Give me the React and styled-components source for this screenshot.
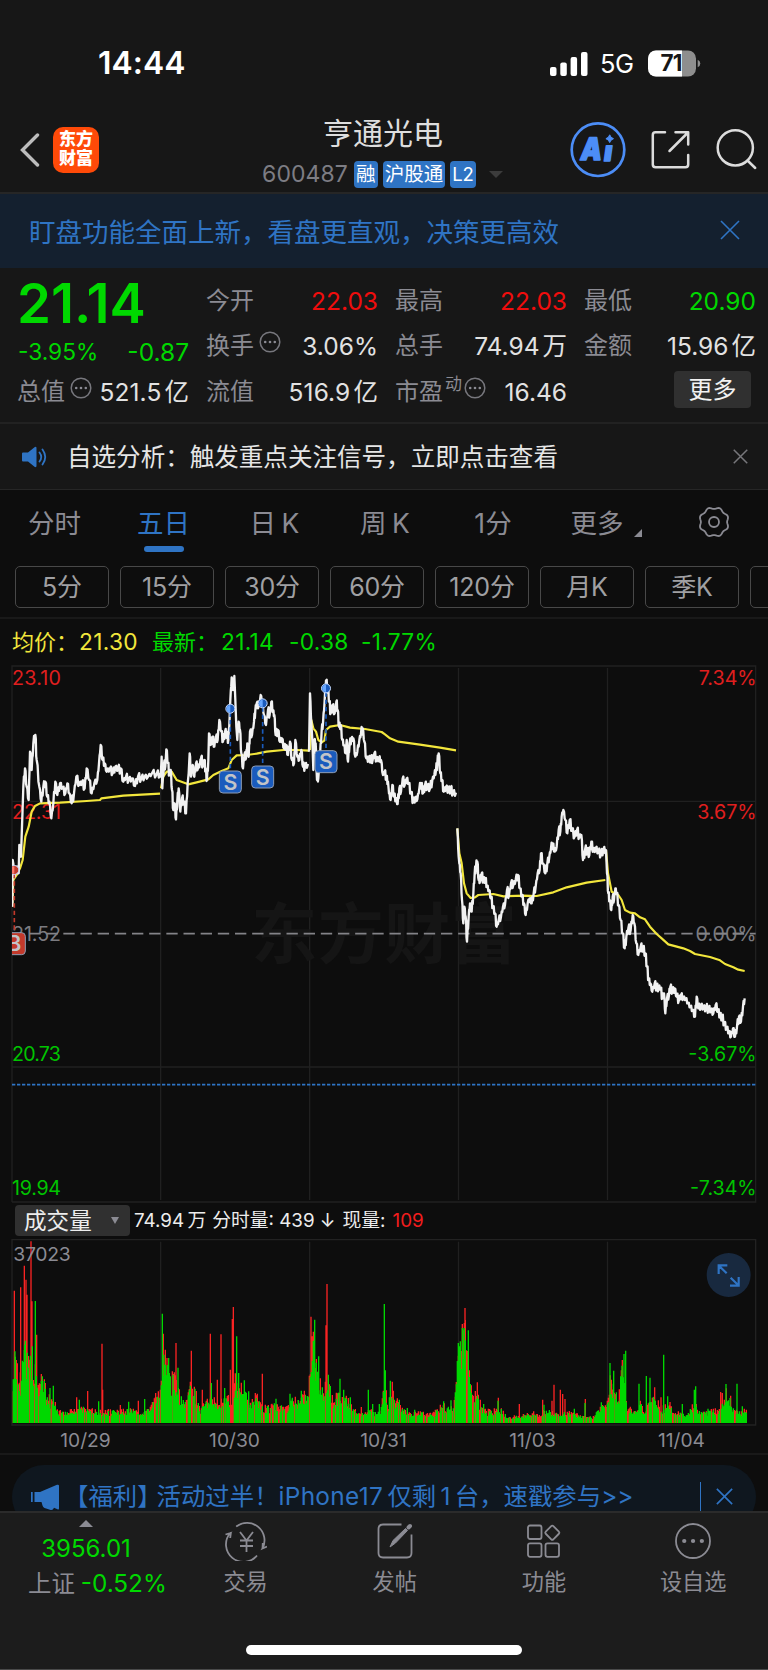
import React from "react";
import styled, { createGlobalStyle } from "styled-components";

const GREEN = "#00d800";
const RED = "#f00d0d";
const BLUE = "#2f74c4";
const GREY = "#8b8b93";

const GlobalStyle = createGlobalStyle`
    * {
        box-sizing: border-box;
    }
    body {
        margin: 0;
        background: #0d0d0d;
        color: #e6e6e6;
        font-family: Inter, "Noto Sans CJK SC", sans-serif;
    }
`;

const Screen = styled.div`
    width: 768px;
    height: 1670px;
    display: flex;
    flex-direction: column;
    overflow: hidden;
    white-space: nowrap;
`;

/* ---------- status bar ---------- */

const StatusBar = styled.div`
    height: 100px;
    flex: none;
    padding: 26px 67px 0 98px;
    display: flex;
    align-items: center;
    justify-content: space-between;
    background: #171717;
    color: #fff;
`;

const Clock = styled.span`
    font-size: 31.8px;
    font-weight: 600;
    line-height: 40px;
    letter-spacing: 0.1px;
`;

const StatusRight = styled.div`
    display: flex;
    align-items: center;
`;

const Network = styled.span`
    font-size: 25.5px;
    line-height: 30px;
    margin: 2px 12px 0 12px;
    width: 36px;
    letter-spacing: -0.4px;
`;

/* ---------- header ---------- */

const Header = styled.header`
    height: 94px;
    flex: none;
    display: grid;
    grid-template-columns: 200px 1fr 200px;
    background: #171717;
    border-bottom: 2px solid #262626;
`;

const HeaderLeft = styled.div`
    display: flex;
    align-items: center;
    padding: 5px 0 0 19px;
    gap: 12px;
    height: 94px;
`;

const Brand = styled.div`
    width: 46px;
    height: 46px;
    border-radius: 10px;
    background: #ff4a08;
    color: #fff;
    font-size: 17px;
    font-weight: 900;
    line-height: 19px;
    padding-top: 3px;
    text-align: center;
    white-space: normal;
`;

const HeaderTitle = styled.div`
    display: flex;
    flex-direction: column;
    align-items: center;
`;

const StockName = styled.div`
    font-size: 30px;
    line-height: 36px;
    margin-top: 15px;
    padding-right: 2px;
    color: #dedede;
`;

const StockMeta = styled.div`
    display: flex;
    align-items: center;
    gap: 5px;
    margin-top: 10px;
    padding-right: 3px;
`;

const Code = styled.span`
    font-size: 23px;
    line-height: 27px;
    letter-spacing: 0.05px;
    color: #7d7d84;
    width: 85px;
    margin-right: 2px;
`;

const Tag = styled.span`
    height: 27px;
    padding: 0 2px;
    border-radius: 4px;
    background: ${BLUE};
    color: #fff;
    font-size: ${(p) => p.$size || 19.5}px;
    line-height: 27px;
`;

const Caret = styled.span`
    border: 7px solid transparent;
    border-top-color: #3c3c3c;
    border-bottom: 0;
    margin-left: 8px;
`;

const HeaderRight = styled.div`
    display: flex;
    align-items: center;
    padding: 3px 0 0 1px;
    height: 94px;
`;

/* ---------- banner ---------- */

const Banner = styled.div`
    height: 74px;
    flex: none;
    padding: 2px 28px 0 29px;
    display: flex;
    align-items: center;
    justify-content: space-between;
    background: #14202f;
    color: ${BLUE};
    font-size: 26.5px;
    line-height: 40px;

    svg {
        margin-bottom: 4px;
    }
`;

/* ---------- quote ---------- */

const Quote = styled.section`
    height: 156px;
    flex: none;
    padding: 10px 0 0 18px;
    display: grid;
    grid-template-columns: repeat(4, 170px);
    grid-template-rows: 45.5px 45.5px 45.5px;
    column-gap: 19px;
    background: #171717;
    border-bottom: 2px solid #222;
`;

const Cell = styled.div`
    display: flex;
    align-items: center;
    justify-content: space-between;
    font-size: 24px;
    line-height: 30px;
    color: ${(p) => p.$color || "#e2e2e2"};
`;

const Label = styled.span`
    display: flex;
    align-items: center;
    color: ${GREY};
    gap: ${(p) => p.$gap || 0}px;
    margin-left: -1px;

    svg {
        margin-top: -8px;
    }
    sup {
        font-size: 17px;
        line-height: 17px;
        margin-top: -14px;
        vertical-align: baseline;
    }
`;

const Value = styled.span`
    font-size: ${(p) => p.$size || 24.5}px;
    letter-spacing: ${(p) => p.$track || 0}px;
    margin-right: -1px;

    i {
        font-style: normal;
        margin-left: 3px;
    }
`;

const Price = styled.div`
    font-size: 54.5px;
    font-weight: 600;
    line-height: 50px;
    padding-top: 5px;
    margin-left: -1px;
    color: ${GREEN};
`;

const Change = styled(Cell)`
    padding-top: 11px;
`;

const MoreButton = styled.button`
    width: 77px;
    height: 37px;
    margin: 2px 4px 0 auto;
    padding: 0;
    border: 0;
    border-radius: 4px;
    background: #303030;
    color: #f2f2f2;
    font: 24px/36px Inter, "Noto Sans CJK SC", sans-serif;
`;

const Notice = styled.div`
    height: 65px;
    flex: none;
    padding: 0 20px 0 21px;
    display: flex;
    align-items: center;
    background: #171717;
    font-size: 24.55px;
    line-height: 36px;

    span {
        flex: 1;
        margin-left: 18px;
    }
`;

/* ---------- period tabs ---------- */

const Tabs = styled.nav`
    height: 77px;
    flex: none;
    border-top: 1px solid #262626;
    display: grid;
    grid-template-columns: 109px 109px 113px 108px 108px 118px 98px;
`;

const Tab = styled.div`
    display: flex;
    flex-direction: column;
    align-items: center;
    padding-top: ${(p) => (p.$icon ? 16 : 13)}px;
    font-size: 26.5px;
    line-height: 40px;
    word-spacing: -2px;
    color: ${(p) => (p.$active ? BLUE : GREY)};

    &::after {
        content: "";
        width: 40px;
        height: 6px;
        margin-top: 3px;
        border-radius: 3px;
        background: ${(p) => (p.$active ? BLUE : "transparent")};
    }
`;

const Corner = styled.i`
    display: inline-block;
    margin: 0 0 -4px 10px;
    border-left: 8px solid transparent;
    border-bottom: 8px solid ${GREY};
`;

const Chips = styled.div`
    height: 53px;
    flex: none;
    display: flex;
    gap: 11px;
    padding-left: 15px;
    border-bottom: 2px solid #191919;
`;

const Chip = styled.div`
    flex: none;
    width: 94px;
    height: 42px;
    border: 1.5px solid #484848;
    border-radius: 5px;
    color: #a0a0a3;
    font-size: 25px;
    letter-spacing: -0.2px;
    line-height: 41px;
    text-align: center;
`;

const Averages = styled.div`
    height: 41px;
    flex: none;
    display: flex;
    padding: 3px 0 0 12px;
    font-size: 22px;
    line-height: 40px;
`;

const Figure = styled.span`
    flex: none;
    width: ${(p) => p.$width}px;
    font-size: ${(p) => (p.$label ? 22 : 22.7)}px;
    letter-spacing: ${(p) => (p.$label ? 0 : 0.3)}px;
    color: ${(p) => p.$color || GREEN};
`;

const Chart = styled.svg`
    display: block;
    flex: none;
    font-family: Inter, "Noto Sans CJK SC", sans-serif;
`;

/* ---------- volume ---------- */

const VolumeBar = styled.div`
    height: 35px;
    flex: none;
    display: flex;
    align-items: center;
    padding: 0 0 2px 15px;
    font-size: 18.8px;
    line-height: 30px;
`;

const Select = styled.div`
    width: 115px;
    height: 31px;
    padding: 0 11px 0 9px;
    margin-right: 4px;
    display: flex;
    align-items: center;
    justify-content: space-between;
    border-radius: 4px;
    background: #303030;
    font-size: 22.6px;
    color: #ededed;

    &::after {
        content: "";
        border: 4px solid transparent;
        border-top: 7px solid ${GREY};
        border-bottom: 0;
    }
`;

const VolumeText = styled.span`
    margin-right: ${(p) => p.$gap || 7}px;
    word-spacing: ${(p) => p.$space || 0}px;
    color: ${(p) => (p.$red ? "#f21d1d" : "#ededed")};
`;

const Dates = styled.div`
    height: 29px;
    flex: none;
    display: grid;
    grid-template-columns: repeat(5, 149px);
    padding-left: 11px;
    border-bottom: 2px solid #191919;
    font-size: 19.2px;
    line-height: 28px;
    color: ${GREY};
    text-align: center;
`;

/* ---------- promo + bottom nav ---------- */

const Promo = styled.div`
    height: 56px;
    flex: none;
    padding: 10px 12px 0;
    overflow: hidden;
`;

const PromoPill = styled.div`
    height: 64px;
    border-radius: 32px;
    background: #0f171f;
    color: ${BLUE};
    display: flex;
    align-items: flex-start;
    padding: 10px 23px 0 18px;
    font-size: 24.4px;
    line-height: 42px;

    svg {
        margin-top: 9px;
    }
    p {
        margin: 0;
        flex: 1;
        padding-left: 4px;
        word-spacing: -2.5px;
    }
    hr {
        width: 1px;
        height: 38px;
        margin: 7px 15px 0 0;
        border: 0;
        background: ${BLUE};
    }
    svg:last-child {
        margin-top: 13px;
    }
`;

const PromoText = styled.span`
    margin-left: -5px;
`;

const Latin = styled.span`
    letter-spacing: 0.3px;
`;

const BottomNav = styled.footer`
    flex: 1;
    display: flex;
    flex-direction: column;
    align-items: center;
    background: #1c1c1c;
    border-top: 2px solid #2b2b2b;
    border-bottom: 1px solid #4a4a4a;
`;

const NavItems = styled.div`
    align-self: stretch;
    height: 132px;
    display: grid;
    grid-template-columns: 171px repeat(4, 149.2px);
`;

const NavItem = styled.div`
    display: flex;
    flex-direction: column;
    align-items: center;
    padding-top: 8px;
    font-size: 22.2px;
    line-height: 30px;
    color: ${GREY};

    svg {
        margin-bottom: 6px;
    }
`;

const IndexItem = styled.div`
    display: flex;
    flex-direction: column;
    align-items: center;
    padding: 7px 0 0 1px;
    font-size: 24px;
    line-height: 34px;
    color: ${GREEN};

    &::before {
        content: "";
        border: 7px solid transparent;
        border-bottom-color: ${GREY};
        border-top: 0;
        margin-bottom: 5px;
    }
    em {
        font-style: normal;
        font-size: 23.4px;
        color: ${GREY};
        margin-right: 6px;
    }
    div {
        padding-left: 27px;
        align-self: flex-start;
        font-size: 24.3px;
    }
`;

const HomeIndicator = styled.div`
    width: 276px;
    height: 10px;
    border-radius: 5px;
    background: #fff;
`;

/* ---------- chart data, 3 units per css pixel ---------- */

const prices = [
    "37,740 38,600 44,650 50,620 56,640 58,555 63,590 70,380 75,325 80,380 86,420 90,275 95,330 100,250 106,225 110,300 118,380 124,425 130,380 136,365 142,410 148,425 154,475 160,430 166,365 172,405 180,370 188,385 196,400 202,370 208,400 215,430 222,400 229,350 238,375 246,365 254,385 260,325 268,360 275,400 283,370 292,360 297,310 302,255 308,300 314,310 320,335 330,325 338,340 346,320 354,330 362,325 370,365 378,350 386,360 396,355 405,378 414,350 424,355 434,350 444,350 456,340 470,342 480,342 482,350 485,290 487,385 492,310 496,320 499,268 504,310 508,345 512,330 516,390 520,450 524,430 528,478 532,420 536,385 541,455 546,415 552,425 558,460 563,370 566,340 569,280 573,350 578,315 583,350 588,310 594,325 600,310 604,290 608,320 613,300 617,335 621,358 625,300 627,220 632,255 638,230 643,260 648,230 653,240 658,180 664,215 669,245 675,215 681,225 685,240 689,170 691,120 695,52 699,90 703,48 706,120 709,200 712,240 716,185 720,210 724,280 729,325 734,280 738,295 742,250 746,290 750,215 756,225 762,185 766,150 770,130 776,140 782,105 787,130 792,165 798,195 804,150 809,165 814,125 819,155 823,165 827,225 834,210 840,245 846,235 852,265 858,255 864,285 870,245 876,300 882,310 886,240 892,290 898,300 904,270 909,320 915,320 924,312",
    "927,275 930,100 934,190 937,240 940,330 943,240 947,250 951,360 955,355 960,290 965,210 969,190 974,120 978,62 984,95 988,125 992,160 998,135 1004,160 1009,125 1013,150 1017,200 1022,195 1027,240 1032,255 1037,280 1040,240 1044,305 1049,250 1054,238 1060,235 1066,290 1072,275 1078,240 1083,220 1088,205 1093,245 1099,295 1106,300 1113,295 1118,300 1123,280 1130,300 1137,295 1143,300 1149,345 1154,335 1159,355 1164,365 1167,400 1172,420 1177,375 1182,410 1188,415 1193,432 1198,385 1203,395 1208,355 1214,375 1220,355 1226,370 1233,400 1240,425 1246,415 1252,418 1258,385 1264,370 1269,400 1275,375 1282,380 1290,385 1297,360 1303,345 1308,330 1312,310 1316,280 1321,340 1326,360 1331,395 1338,380 1345,395 1352,385 1359,400 1368,398",
    "1372,505 1376,590 1378,610 1382,640 1386,720 1390,790 1393,740 1397,770 1401,845 1406,770 1410,730 1415,755 1420,700 1424,640 1428,620 1432,605 1436,660 1440,665 1445,640 1450,665 1456,655 1461,680 1467,690 1473,715 1479,740 1485,760 1490,800 1496,780 1503,770 1509,740 1515,735 1521,690 1527,705 1533,670 1540,675 1547,660 1554,645 1560,685 1566,710 1572,730 1577,765 1583,730 1589,715 1595,730 1601,700 1607,680 1613,640 1619,630 1623,580 1629,610 1636,640 1642,610 1648,590 1653,565 1658,550 1664,575 1670,560 1676,510 1681,515 1685,470 1690,450 1696,480 1702,520 1709,480 1716,510 1724,530 1731,510 1738,530 1744,525 1749,600 1755,570 1762,570 1768,585 1774,545 1780,575 1787,565 1795,575 1803,583 1810,570 1818,570 1821,640 1825,700 1829,720 1834,750 1838,710 1842,720 1846,685 1850,700 1856,735 1862,780 1868,820 1874,865 1879,830 1885,805 1892,810 1898,765 1903,790 1909,850 1915,885 1922,860 1929,865 1936,880 1941,920 1946,960 1951,970 1957,995 1964,970 1970,985 1976,980 1982,985 1987,1015 1992,1000 1996,1060 2001,1015 2007,1005 2011,980 2017,995 2024,985 2030,1010 2037,1020 2043,1005 2050,1015 2057,1015 2064,1030 2071,1040 2078,1050 2085,1070 2090,1010 2095,1045 2103,1035 2110,1045 2118,1045 2126,1045 2133,1050 2140,1060 2147,1035 2154,1050 2160,1070 2166,1070 2173,1090 2180,1105 2187,1115 2193,1130 2199,1105 2205,1130 2211,1100 2217,1070 2223,1085 2229,1040 2234,1015",
];

const averages = [
    "37,740 40,660 50,645 60,625 68,600 76,530 86,500 95,455 105,438 120,430 180,428 260,423 300,420 304,415 370,407 480,401",
    "483,385 490,350 500,335 515,335 530,360 565,373 590,367 625,358 640,345 665,333 685,325 695,300 710,286 740,285 770,281 800,275 850,270 890,270 927,272",
    "930,270 934,180 940,205 948,215 955,240 965,247 973,242 978,210 990,200 1020,195 1050,203 1095,207 1145,216 1155,223 1170,235 1195,245 1260,254 1320,263 1368,271",
    "1372,505 1378,580 1385,610 1392,670 1400,700 1412,714 1425,712 1435,705 1480,702 1510,709 1570,707 1610,708 1660,697 1700,682 1760,668 1816,660",
    "1818,570 1824,640 1835,695 1855,705 1865,720 1875,750 1890,758 1905,760 1920,772 1935,778 1950,800 1970,822 1985,835 2005,853 2050,865 2070,873 2085,882 2130,891 2160,901 2175,912 2200,922 2215,929 2234,933",
];

const volumeLevels =
    "40,170 44,200 60,120 75,230 90,190 105,180 112,130 130,130 140,80 160,65 175,35 215,35 240,45 265,45 280,35 330,35 385,40 430,30 450,45 470,80 485,110 495,190 510,130 525,130 540,80 555,55 570,110 585,95 600,40 620,60 635,75 655,50 670,80 690,70 705,130 720,110 735,110 750,60 770,80 790,50 810,45 830,60 860,45 880,75 900,65 925,100 940,240 955,150 970,90 985,130 1000,70 1020,90 1050,60 1070,30 1110,35 1140,30 1155,120 1165,50 1175,120 1185,70 1200,50 1230,25 1250,30 1300,30 1330,50 1360,50 1375,220 1390,270 1395,285 1405,180 1415,90 1435,75 1450,40 1470,35 1500,45 1520,20 1560,20 1580,25 1620,25 1640,40 1660,30 1690,30 1720,30 1745,20 1780,18 1800,45 1820,70 1830,130 1845,110 1855,60 1870,200 1880,50 1895,40 1910,30 1920,70 1932,25 1945,60 1965,75 1985,50 2010,50 2030,30 2060,25 2085,60 2100,30 2130,35 2160,40 2180,90 2195,45 2215,35 2240,35";

const redPeaks =
    "43,397 62,407 73,472 78,430 81,385 93,545 96,365 110,265 230,77 263,96 306,238 308,100 361,54 415,67 467,90 490,268 501,195 528,240 574,217 607,100 631,268 652,130 663,266 691,160 697,312 700,348 787,148 772,88 816,58 933,319 937,260 981,417 978,293 1084,48 1192,74 1306,40 1321,55 1372,122 1395,345 1401,185 1414,112 1432,122 1466,40 1495,76 1558,57 1601,35 1628,70 1662,115 1656,67 1681,100 1688,87 1695,72 1756,72 1964,107 1983,77 2010,63 2140,43 2162,93 2167,90 2192,82 2233,43";

const greenPeaks =
    "45,215 74,235 97,230 106,366 127,140 150,105 160,112 238,70 296,65 386,64 434,72 487,328 492,205 506,195 519,145 534,166 585,103 634,120 674,105 710,260 716,150 733,128 746,95 828,73 870,88 904,97 944,310 956,200 985,145 1020,133 1031,100 1051,77 1105,100 1118,57 1138,57 1153,357 1156,158 1171,127 1198,70 1222,45 1244,40 1331,65 1353,68 1379,230 1381,245 1388,283 1393,285 1405,278 1451,57 1494,67 1632,55 1723,43 1755,60 1804,62 1830,180 1841,157 1862,140 1866,172 1872,207 1877,217 1917,118 1939,141 1950,136 1991,205 2003,80 2047,57 2083,100 2087,110 2124,43 2178,117 2190,75 2211,118 2227,50";

const parse = (text) => text.split(" ").map((p) => p.split(",").map(Number));

const makeRandom = (seed) => () => {
    seed = (seed * 16807) % 2147483647;
    return seed / 2147483647;
};

// one small tick between two quotes so the line keeps its ragged look
const ragged = (text) => {
    const random = makeRandom(77);
    const points = parse(text);
    const out = [];
    points.forEach(([x, y], i) => {
        out.push(`${x},${y}`);
        const next = points[i + 1];
        if (next && next[0] - x > 3) {
            const swing = 5 + random() * 9;
            out.push(`${x + (next[0] - x) * 0.35},${(y * 2 + next[1]) / 3 - swing}`);
            out.push(`${x + (next[0] - x) * 0.65},${(y + next[1] * 2) / 3 + swing}`);
        }
    });
    return out.join(" ");
};

const BASE = 552;
const bar = (x, h) => `M${x.toFixed(1)} ${BASE}v${-h.toFixed(0)}`;

const buildVolume = () => {
    const random = makeRandom(2024);
    const levels = parse(volumeLevels);
    const red = parse(redPeaks).map(([x, h]) => bar(x, h));
    const green = parse(greenPeaks).map(([x, h]) => bar(x, h));
    let k = 0;
    for (let x = 40; x < 2240; x += 3) {
        while (k < levels.length - 2 && levels[k + 1][0] < x) k++;
        const [x0, h0] = levels[k];
        const [x1, h1] = levels[k + 1];
        const level = h0 + ((h1 - h0) * (x - x0)) / (x1 - x0);
        red.push(bar(x, level * (0.55 + random() * 0.65)));
        if (random() < 0.75) green.push(bar(x, level * (0.6 + random() * 0.5)));
    }
    return { red: red.join(""), green: green.join("") };
};

const volume = buildVolume();
const days = [482, 929, 1375.5, 1822.5];

/* ---------- icons ---------- */

const Cross = ({ size, width = 1.6, color = "currentColor" }) => (
    <svg width={size} height={size} viewBox="0 0 20 20">
        <path d="M1 1L19 19M19 1L1 19" stroke={color} strokeWidth={width} />
    </svg>
);

const Dots = () => (
    <svg width="22" height="22" viewBox="0 0 22 22">
        <circle cx="11" cy="11" r="9.8" fill="none" stroke="#77777d" strokeWidth="1.5" />
        <g fill={GREY}>
            <circle cx="6.2" cy="11" r="1.3" />
            <circle cx="11" cy="11" r="1.3" />
            <circle cx="15.8" cy="11" r="1.3" />
        </g>
    </svg>
);

const gearPath = Array.from({ length: 96 }, (_, i) => {
    const a = (i * Math.PI) / 48;
    const r = 14 - 0.9 * Math.cos(8 * a);
    return `${(16 + r * Math.cos(a)).toFixed(2)},${(16 + r * Math.sin(a)).toFixed(2)}`;
}).join(" ");

const Gear = () => (
    <svg width="32" height="32" viewBox="0 0 32 32" fill="none" stroke={GREY} strokeWidth="1.8">
        <polygon points={gearPath} strokeLinejoin="round" />
        <circle cx="16" cy="16" r="5" />
    </svg>
);

const Signal = () => (
    <svg width="38" height="25" viewBox="0 0 38 25" fill="#fff">
        <rect x="0" y="16" width="6.5" height="9" rx="2" />
        <rect x="10.3" y="11.5" width="6.5" height="13.5" rx="2" />
        <rect x="20.6" y="6" width="6.5" height="19" rx="2" />
        <rect x="31" y="1" width="6.5" height="24" rx="2" />
    </svg>
);

const Battery = () => (
    <svg width="53" height="27" viewBox="0 0 53 27">
        <clipPath id="charge">
            <rect width="34" height="27" />
        </clipPath>
        <rect y="0.5" width="48" height="26" rx="8" fill="#8e8e8e" />
        <rect y="0.5" width="48" height="26" rx="8" fill="#fff" clipPath="url(#charge)" />
        <path d="M49.7 9.8q2.6 1 2.6 3.7t-2.6 3.7z" fill="#8e8e8e" />
        <text x="23" y="21.3" fontSize="22.5" fontWeight="700" fill="#171717" textAnchor="middle" letterSpacing="-0.8">
            71
        </text>
    </svg>
);

const Back = () => (
    <svg width="22" height="34" viewBox="0 0 22 34" fill="none">
        <path d="M18.5 2L3.5 17L18.5 32" stroke="#bdbdbd" strokeWidth="3.4" strokeLinecap="round" />
    </svg>
);

const HeaderIcons = () => (
    <svg width="199" height="60" viewBox="569 119 199 60" fill="none">
        <circle cx="598" cy="149.7" r="26.3" stroke="#4c8df6" strokeWidth="2.7" />
        <g fill="#4c8df6" stroke="#4c8df6" strokeWidth="1.6" strokeLinejoin="round" fontSize="31" fontWeight="900">
            <text transform="translate(579.5 160) skewX(-8) scale(.86 1)">A</text>
            <text transform="translate(603 161) skewX(-8)" fontSize="28">ı</text>
            <path d="M609.7 134.8q.8 3 3.8 3.900q-3 .9-3.800 3.900q-.8-3-3.800-3.900q3-.9 3.800-3.900z" strokeWidth="1" />
        </g>
        <g stroke="#dcdcdc" strokeWidth="2.5" strokeLinecap="round" strokeLinejoin="round">
            <path d="M665 132.300H655.500q-2.700 0-2.700 2.700V164.500q0 2.700 2.700 2.700H685.500q2.700 0 2.700-2.700V155" />
            <path d="M675.500 132.300H688.200V144.500M687.500 133L669.500 151" />
            <circle cx="735.300" cy="147.800" r="17.600" />
            <path d="M747.500 160.500L755.200 168" />
        </g>
    </svg>
);

const Speaker = () => (
    <svg width="28" height="22" viewBox="0 0 28 22" fill={BLUE}>
        <path d="M1 7.500q0-1 1-1H7L13.500 1.200q2-1.200 2 1V19.800q0 2.200-2 1L7 15.500H2q-1 0-1-1z" />
        <path d="M18.500 6.500q3.500 4.500 0 9M21.500 3.500q5.500 7.500 0 15" fill="none" stroke={BLUE} strokeWidth="1.800" strokeLinecap="round" />
    </svg>
);

const Horn = () => (
    <svg width="30" height="26" viewBox="0 0 30 26" fill={BLUE}>
        <path d="M1 8h1.700v10H1zM4.500 8H10L27 .8q2-.6 2 1V24.500q0 1.300-1.500.7L24 23.700q-1.200 3-4 2L14.500 24q-1.500-.6-2-2.500L11.500 18H4.500z" />
    </svg>
);

const navIcon = {
    width: 42,
    height: 40,
    viewBox: "0 0 42 40",
    fill: "none",
    stroke: GREY,
    strokeWidth: 1.8,
};

const TradeIcon = () => (
    <svg {...navIcon}>
        <path d="M11.200 5.600A17.500 17.500 0 0 1 37.500 27.500L42 25.500M37.500 27.500L37.800 22" />
        <path d="M32 34.500A17.500 17.500 0 0 1 5 12.200L.5 13.500M6 11L5.200 17" />
        <path d="M15 11l6.500 8.500L28 11M15 19.500h13M15 25h13M21.500 19.500V31" />
    </svg>
);

const PostIcon = () => (
    <svg {...navIcon}>
        <path d="M27.500 3.500H9q-4.500 0-4.500 4.500V32q0 4.500 4.500 4.500H33q4.500 0 4.500-4.500V13.500" />
        <path d="M16 26L19 19.500L31.500 7.500L33.500 9.500L21.500 22z" fill={GREY} strokeWidth="1" />
        <path d="M34.500 6.500l1.500-1.500" strokeWidth="4" strokeLinecap="round" />
    </svg>
);

const GridIcon = () => (
    <svg {...navIcon}>
        <rect x="5" y="4.500" width="13.500" height="13.500" rx="2" />
        <rect x="5" y="22.300" width="13.500" height="13.500" rx="2" />
        <rect x="22.500" y="22.300" width="13.500" height="13.500" rx="2" />
        <rect x="23.900" y="6.300" width="10.800" height="10.800" rx="1.500" transform="rotate(45 29.300 11.700)" />
    </svg>
);

const AddIcon = () => (
    <svg {...navIcon}>
        <circle cx="21" cy="20" r="17" />
        <path d="M12.200 20h.1M21 20h.1M29.800 20h.1" strokeWidth="4.200" strokeLinecap="round" />
    </svg>
);

const Marker = ({ x, top, y, letter = "S", fill = "#1a5bbd", dot = "#67a7ff" }) => (
    <g>
        <path d={`M${x} ${top + 12}V${y - 34}`} stroke={fill} strokeWidth="5" strokeDasharray="13 9" />
        <circle cx={x} cy={top} r="13.5" fill={fill} stroke="#c8dcff" strokeWidth="3" />
        <path d={`M${x} ${top - 11}a11 11 0 0 0 0 22z`} fill={dot} />
        <rect x={x - 33} y={y - 33} width="66" height="66" rx="11" fill={fill} stroke="#8f9db3" strokeWidth="3" />
        <text x={x} y={y + 23} fontSize="64" fontWeight="600" fill="#c2c4c8" textAnchor="middle">
            {letter}
        </text>
    </g>
);

const axis = [
    [53, "23.10", "7.34%", "#e01f1f"],
    [457, "22.31", "3.67%", "#e01f1f"],
    [821, "21.52", "0.00%", "#7b7b80"],
    [1182, "20.73", "-3.67%", "#00c400"],
    [1584, "19.94", "-7.34%", "#00c400"],
];

const PriceChart = () => (
    <Chart width="768" height="544" viewBox="0 0 2304 1632" fill="none">
        <clipPath id="plot">
            <rect x="36" y="18" width="2240" height="1610" />
        </clipPath>
        <g stroke="#202020" strokeWidth="4">
            <path d="M36 1626V18H2267V1626H36M36 424H2267M36 1221H2267" />
            {days.map((x) => (
                <path key={x} d={`M${x} 24V1620`} />
            ))}
        </g>
        <text x="754" y="894" fontSize="198" fontWeight="700" fill="#151515" textLength="796">
            东方财富
        </text>
        <path d="M190 821H2267" stroke="#838388" strokeWidth="5.500" strokeDasharray="34 17.500" />
        <path d="M36 1274H2267" stroke={BLUE} strokeWidth="5.500" strokeDasharray="10 5" />
        {axis.map(([y, price, percent, color]) => (
            <g key={price} fill={color} fontSize="59">
                <text x="36" y={y + 21} textLength="147">
                    {price}
                </text>
                <text x="2270" y={y + 21} textAnchor="end">
                    {percent}
                </text>
            </g>
        ))}
        <path d="M88 821H182M2095 821H2250" stroke="#838388" strokeWidth="5" strokeDasharray="34 17.500" />
        <g clipPath="url(#plot)" strokeLinejoin="round">
            {averages.map((points) => (
                <polyline key={points} points={points} stroke="#f2e63c" strokeWidth="6.500" />
            ))}
            {prices.map((points) => (
                <polyline key={points} points={ragged(points)} stroke="#f2f2f2" strokeWidth="7" />
            ))}
            <Marker x={691} top={146} y={366} />
            <Marker x={788} top={130} y={351} />
            <Marker x={978} top={85} y={305} />
            <Marker x={43} top={630} y={851} letter="B" fill="#c2392b" dot="#ff7a6b" />
        </g>
    </Chart>
);

const VolumeChart = () => (
    <Chart width="768" height="187" viewBox="0 0 2304 561" fill="none">
        <path d="M36 558V2H2267V558z" stroke="#222" strokeWidth="4" />
        {days.map((x) => (
            <path key={x} d={`M${x} 8V552`} stroke="#202020" strokeWidth="4" />
        ))}
        <path d={volume.red} stroke="#fa2323" strokeWidth="4" />
        <path d={volume.green} stroke={GREEN} strokeWidth="4" />
        <text x="40" y="65" fontSize="58" fill={GREY} textLength="172">
            37023
        </text>
        <circle cx="2186" cy="108" r="66" fill="#18293f" />
        <path
            d="M2180 103L2157 80M2156 105V79H2182M2192 116L2215 139M2216 114V140H2190"
            stroke={BLUE}
            strokeWidth="6.500"
        />
    </Chart>
);

const tabs = ["分时", "五日", "日 K", "周 K", "1分"];
const chips = ["5分", "15分", "30分", "60分", "120分", "月K", "季K", ""];
const dates = ["10/29", "10/30", "10/31", "11/03", "11/04"];
const navItems = [
    ["交易", TradeIcon],
    ["发帖", PostIcon],
    ["功能", GridIcon],
    ["设自选", AddIcon],
];

const App = () => (
    <Screen>
        <GlobalStyle />
        <StatusBar>
            <Clock>14:44</Clock>
            <StatusRight>
                <Signal />
                <Network>5G</Network>
                <Battery />
            </StatusRight>
        </StatusBar>
        <Header>
            <HeaderLeft>
                <Back />
                <Brand>
                    东方
                    <br />
                    财富
                </Brand>
            </HeaderLeft>
            <HeaderTitle>
                <StockName>亨通光电</StockName>
                <StockMeta>
                    <Code>600487</Code>
                    <Tag>融</Tag>
                    <Tag>沪股通</Tag>
                    <Tag $size={18.5}>L2</Tag>
                    <Caret />
                </StockMeta>
            </HeaderTitle>
            <HeaderRight>
                <HeaderIcons />
            </HeaderRight>
        </Header>
        <Banner>
            盯盘功能全面上新，看盘更直观，决策更高效
            <Cross size={20} />
        </Banner>
        <Quote>
            <Cell>
                <Price>21.14</Price>
            </Cell>
            <Cell $color={RED}>
                <Label>今开</Label>
                <Value>22.03</Value>
            </Cell>
            <Cell $color={RED}>
                <Label>最高</Label>
                <Value>22.03</Value>
            </Cell>
            <Cell $color={GREEN}>
                <Label>最低</Label>
                <Value>20.90</Value>
            </Cell>
            <Change $color={GREEN}>
                <Value $size={22.7}>-3.95%</Value>
                <Value>-0.87</Value>
            </Change>
            <Cell>
                <Label $gap={5}>
                    换手
                    <Dots />
                </Label>
                <Value>3.06%</Value>
            </Cell>
            <Cell>
                <Label>总手</Label>
                <Value>
                    74.94<i>万</i>
                </Value>
            </Cell>
            <Cell>
                <Label>金额</Label>
                <Value>
                    15.96<i>亿</i>
                </Value>
            </Cell>
            <Cell>
                <Label $gap={5}>
                    总值
                    <Dots />
                </Label>
                <Value $track={0.1}>
                    521.5<i>亿</i>
                </Value>
            </Cell>
            <Cell>
                <Label>流值</Label>
                <Value $track={0.1}>
                    516.9<i>亿</i>
                </Value>
            </Cell>
            <Cell>
                <Label $gap={2}>
                    市盈<sup>动</sup>
                    <Dots />
                </Label>
                <Value>16.46</Value>
            </Cell>
            <MoreButton>更多</MoreButton>
        </Quote>
        <Notice>
            <Speaker />
            <span>自选分析：触发重点关注信号，立即点击查看</span>
            <Cross size={15} color="#77777b" width={2} />
        </Notice>
        <Tabs>
            {tabs.map((name) => (
                <Tab key={name} $active={name === "五日"}>
                    {name}
                </Tab>
            ))}
            <Tab>
                <span>
                    更多
                    <Corner />
                </span>
            </Tab>
            <Tab $icon>
                <Gear />
            </Tab>
        </Tabs>
        <Chips>
            {chips.map((name) => (
                <Chip key={name}>{name}</Chip>
            ))}
        </Chips>
        <Averages>
            <Figure $label $width={67} $color="#f2e63c">
                均价：
            </Figure>
            <Figure $width={73} $color="#f2e63c">
                21.30
            </Figure>
            <Figure $label $width={69}>
                最新：
            </Figure>
            <Figure $width={68}>21.14</Figure>
            <Figure $width={72}>-0.38</Figure>
            <Figure $width={80}>-1.77%</Figure>
        </Averages>
        <PriceChart />
        <VolumeBar>
            <Select>成交量</Select>
            <VolumeText $gap={6} $space={-2}>
                74.94 万
            </VolumeText>
            <VolumeText>分时量: 439 ↓</VolumeText>
            <VolumeText>现量:</VolumeText>
            <VolumeText $red>109</VolumeText>
        </VolumeBar>
        <VolumeChart />
        <Dates>
            {dates.map((date) => (
                <span key={date}>{date}</span>
            ))}
        </Dates>
        <Promo>
            <PromoPill>
                <Horn />
                <p>
                    【福利】
                    <PromoText>
                        活动过半！<Latin>iPhone17</Latin> 仅剩 1 台，速戳参与&gt;&gt;
                    </PromoText>
                </p>
                <hr />
                <Cross size={17} width={1.9} />
            </PromoPill>
        </Promo>
        <BottomNav>
            <NavItems>
                <IndexItem>
                    3956.01
                    <div>
                        <em>上证</em>-0.52%
                    </div>
                </IndexItem>
                {navItems.map(([name, Icon]) => (
                    <NavItem key={name}>
                        <Icon />
                        {name}
                    </NavItem>
                ))}
            </NavItems>
            <HomeIndicator />
        </BottomNav>
    </Screen>
);

export default App;
